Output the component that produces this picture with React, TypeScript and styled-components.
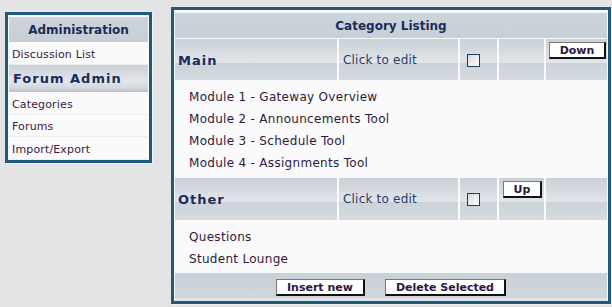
import styled, { createGlobalStyle } from "styled-components";

// ---------------------------------------------------------------- globals

const GlobalStyle = createGlobalStyle`
  body {
    margin: 0;
    background: #e4e4e4;
    font-family: "DejaVu Sans", Verdana, sans-serif;
  }
`;

const gloss = `linear-gradient(to bottom, #c9d0d7 0%, #e2e6ea 58%, #cbd2d9 58%, #d5dbe0 100%)`;

// ---------------------------------------------------------------- layout

const Page = styled.div`
  display: flex;
  align-items: flex-start;
  gap: 19px;
  width: 612px;
  height: 307px;
  padding: 7px 0 0 5px;
  box-sizing: border-box;
`;

const Panel = styled.div`
  border: 3px solid #1d5a7e;
  background: #fafafa;
  box-sizing: border-box;
  box-shadow: 1px 1px 0 #eef2f4;
`;

// ---------------------------------------------------------------- sidebar

const Sidebar = styled(Panel)`
  width: 147px;
  margin-top: 5px;
  padding: 2px 1px 0;
  display: flex;
  flex-direction: column;
`;

const SideHeading = styled.div`
  height: 25px;
  line-height: 27px;
  background: linear-gradient(to bottom, #cdd4db, #c6ced6);
  color: #1b2b5b;
  font-size: 12px;
  font-weight: bold;
  text-align: center;
`;

const SideSection = styled.div`
  height: 27px;
  line-height: 27px;
  padding-left: 4px;
  background: linear-gradient(to bottom, #c9d0d7 0%, #e3e7eb 60%, #d2d8de 85%, #b9c1c9 100%);
  color: #1b2b5b;
  font-size: 13px;
  font-weight: bold;
  letter-spacing: 1px;
`;

const SideLink = styled.a<{ $h: number }>`
  display: block;
  height: ${(p) => p.$h}px;
  line-height: ${(p) => p.$h + 2}px;
  padding-left: 3px;
  font-size: 11px;
  letter-spacing: 0.15px;
  color: #3b2140;
  text-decoration: none;
  border-bottom: 1px solid #eeeeee;
  box-sizing: border-box;
`;

// ---------------------------------------------------------------- listing

const Listing = styled(Panel)`
  width: 440px;
  padding: 3px 1px 0;
  display: flex;
  flex-direction: column;
`;

const ListingTitle = styled.div`
  height: 25px;
  line-height: 27px;
  margin-bottom: 1px;
  background: linear-gradient(to bottom, #cdd4db, #c7cfd7);
  color: #1b2b5b;
  font-size: 12px;
  font-weight: bold;
  text-align: center;
`;

const CategoryRow = styled.div<{ $h: number }>`
  display: grid;
  grid-template-columns: 162px 119px 37px 45px 61px;
  column-gap: 2px;
  height: ${(p) => p.$h}px;
`;

const Cell = styled.div<{ $top?: boolean }>`
  background: ${gloss};
  display: flex;
  align-items: ${(p) => (p.$top ? "flex-start" : "center")};
  justify-content: ${(p) => (p.$top ? "center" : "flex-start")};
  padding-top: ${(p) => (p.$top ? "3px" : "0")};
  box-sizing: border-box;
`;

const CategoryName = styled(Cell)`
  padding-left: 3px;
  padding-top: 1px;
  color: #1b2b5b;
  font-size: 13px;
  font-weight: bold;
  letter-spacing: 1px;
`;

const EditText = styled(Cell)`
  padding-left: 4px;
  color: #283a68;
  font-size: 12px;
  letter-spacing: 0.2px;
`;

const CheckCell = styled(Cell)`
  padding-left: 7px;
  padding-top: 1px;
`;

const Check = styled.input.attrs({ type: "checkbox" })`
  appearance: none;
  width: 13px;
  height: 13px;
  margin: 0;
  border: 1px solid #1f3d5e;
  background: linear-gradient(135deg, #d8d8d8, #ffffff);
`;

const Button = styled.button<{ $shift?: number }>`
  height: 17px;
  padding: 0 10px;
  margin-left: ${(p) => p.$shift ?? 0}px;
  background: #ffffff;
  border: 1px solid #777777;
  border-right: 2px solid #111111;
  border-bottom: 2px solid #111111;
  color: #2a1840;
  font-family: "DejaVu Sans", Verdana, sans-serif;
  font-size: 11px;
  font-weight: bold;
  line-height: 13px;
  cursor: pointer;
`;

const Items = styled.ul<{ $h: number }>`
  list-style: none;
  margin: 0;
  height: ${(p) => p.$h}px;
  padding: 6px 0 0 14px;
  box-sizing: border-box;
`;

const Item = styled.li`
  height: 22px;
  line-height: 22px;
  color: #2d1b3d;
  font-size: 12px;
  letter-spacing: 0.3px;
`;

const Footer = styled.div`
  height: 28px;
  display: flex;
  justify-content: center;
  align-items: flex-start;
  gap: 20px;
  padding-top: 6px;
  box-sizing: border-box;
  background: linear-gradient(to bottom, #c8d0d8 0%, #d0d7dd 88%, #dde3e8 88%, #dde3e8 100%);
`;

// ---------------------------------------------------------------- data

const categories = [
  {
    name: "Main",
    move: "Down",
    shift: 2,
    h: 41,
    list: 98,
    items: [
      "Module 1 - Gateway Overview",
      "Module 2 - Announcements Tool",
      "Module 3 - Schedule Tool",
      "Module 4 - Assignments Tool",
    ],
  },
  {
    name: "Other",
    move: "Up",
    shift: 2,
    h: 42,
    list: 53,
    items: ["Questions", "Student Lounge"],
  },
];

export default function App() {
  return (
    <>
      <GlobalStyle />
      <Page>
        <Sidebar>
          <SideHeading>Administration</SideHeading>
          <SideLink $h={23}>Discussion List</SideLink>
          <SideSection>Forum Admin</SideSection>
          <SideLink $h={23}>Categories</SideLink>
          <SideLink $h={22}>Forums</SideLink>
          <SideLink $h={23}>Import/Export</SideLink>
        </Sidebar>

        <Listing>
          <ListingTitle>Category Listing</ListingTitle>
          {categories.map((c) => (
            <div key={c.name}>
              <CategoryRow $h={c.h}>
                <CategoryName>{c.name}</CategoryName>
                <EditText>Click to edit</EditText>
                <CheckCell>
                  <Check />
                </CheckCell>
                {c.move === "Down" ? (
                  <>
                    <Cell />
                    <Cell $top>
                      <Button $shift={c.shift}>{c.move}</Button>
                    </Cell>
                  </>
                ) : (
                  <>
                    <Cell $top>
                      <Button $shift={c.shift}>{c.move}</Button>
                    </Cell>
                    <Cell />
                  </>
                )}
              </CategoryRow>
              <Items $h={c.list}>
                {c.items.map((i) => (
                  <Item key={i}>{i}</Item>
                ))}
              </Items>
            </div>
          ))}
          <Footer>
            <Button>Insert new</Button>
            <Button>Delete Selected</Button>
          </Footer>
        </Listing>
      </Page>
    </>
  );
}
